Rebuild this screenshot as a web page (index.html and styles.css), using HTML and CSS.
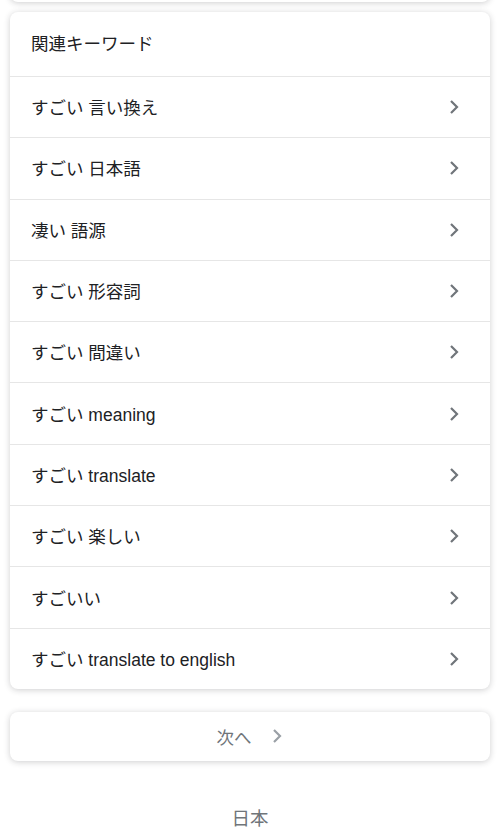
FILE: index.html
```html
<!DOCTYPE html>
<html lang="ja">
<head>
<meta charset="utf-8">
<link rel="stylesheet" href="styles.css">
</head>
<body>
<div class="prev-card"></div>
<div class="card">
  <div class="card-header">関連キーワード</div>
  <a class="row"><span>すごい 言い換え</span><svg class="chev" viewBox="0 0 10 16"><path d="M2 2l6 6-6 6"/></svg></a>
  <a class="row"><span>すごい 日本語</span><svg class="chev" viewBox="0 0 10 16"><path d="M2 2l6 6-6 6"/></svg></a>
  <a class="row"><span>凄い 語源</span><svg class="chev" viewBox="0 0 10 16"><path d="M2 2l6 6-6 6"/></svg></a>
  <a class="row"><span>すごい 形容詞</span><svg class="chev" viewBox="0 0 10 16"><path d="M2 2l6 6-6 6"/></svg></a>
  <a class="row"><span>すごい 間違い</span><svg class="chev" viewBox="0 0 10 16"><path d="M2 2l6 6-6 6"/></svg></a>
  <a class="row"><span>すごい meaning</span><svg class="chev" viewBox="0 0 10 16"><path d="M2 2l6 6-6 6"/></svg></a>
  <a class="row"><span>すごい translate</span><svg class="chev" viewBox="0 0 10 16"><path d="M2 2l6 6-6 6"/></svg></a>
  <a class="row"><span>すごい 楽しい</span><svg class="chev" viewBox="0 0 10 16"><path d="M2 2l6 6-6 6"/></svg></a>
  <a class="row"><span>すごいい</span><svg class="chev" viewBox="0 0 10 16"><path d="M2 2l6 6-6 6"/></svg></a>
  <a class="row"><span>すごい translate to english</span><svg class="chev" viewBox="0 0 10 16"><path d="M2 2l6 6-6 6"/></svg></a>
</div>
<div class="next">
  <span>次へ</span><svg class="chev light" viewBox="0 0 10 16"><path d="M2 2l6 6-6 6"/></svg>
</div>
<div class="footer">日本</div>
</body>
</html>
```
FILE: styles.css
```css
html, body {
  margin: 0;
  padding: 0;
  background: #fff;
}
body {
  font-family: "Liberation Sans", "Noto Sans CJK JP", sans-serif;
  color: #202124;
  width: 500px;
  overflow: hidden;
}
.prev-card {
  margin: -10px 10px 0;
  height: 12px;
  border-radius: 0 0 8px 8px;
  background: #fff;
  box-shadow: 0 1px 6px rgba(32, 33, 36, 0.22);
}
.card {
  margin: 10px 10px 0;
  border-radius: 8px;
  background: #fff;
  box-shadow: 0 1px 6px rgba(32, 33, 36, 0.22);
  overflow: hidden;
}
.card-header {
  height: 64px;
  box-sizing: border-box;
  padding: 20px 0 0 21px;
  font-size: 17.5px;
  line-height: 24px;
}
.row {
  display: flex;
  align-items: center;
  justify-content: space-between;
  height: 61.3px;
  box-sizing: border-box;
  border-top: 1px solid #e6e6e6;
  padding: 2px 31px 0 21px;
  font-size: 17.5px;
  line-height: 24px;
  color: #202124;
}
.row .chev {
  margin-top: -2px;
}
.chev {
  width: 10px;
  height: 16px;
  fill: none;
  stroke: #70757a;
  stroke-width: 2.2;
}
.chev.light {
  stroke: #9aa0a6;
}
.next {
  margin: 23px 10px 0;
  height: 49px;
  border-radius: 8px;
  background: #fff;
  box-shadow: 0 1px 6px rgba(32, 33, 36, 0.22);
  display: flex;
  align-items: center;
  justify-content: center;
  gap: 20px;
  padding-right: 2px;
  font-size: 17.5px;
  color: #70757a;
}
.footer {
  margin-top: 46px;
  text-align: center;
  font-size: 18.5px;
  line-height: 24px;
  color: #70757a;
}
```
